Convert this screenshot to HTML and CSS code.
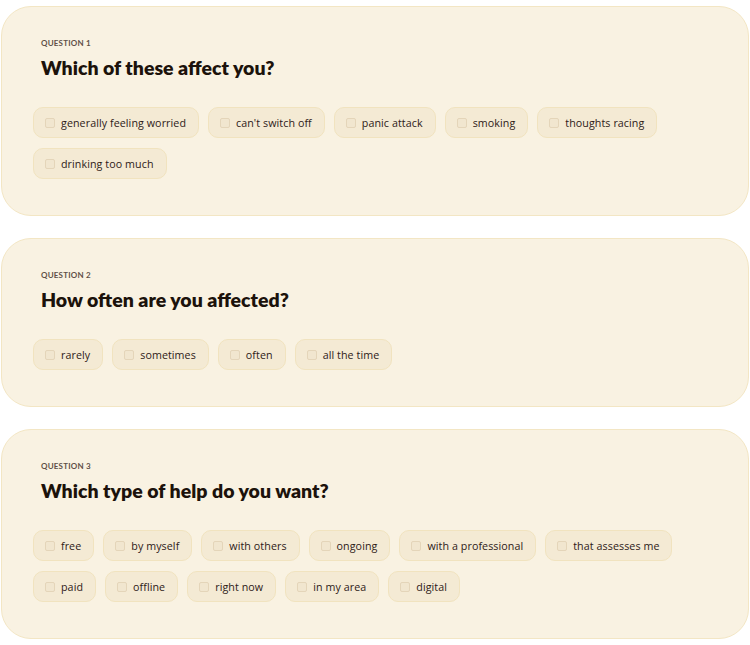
FILE: index.html
```html
<!DOCTYPE html>
<html lang="en">
<head>
<meta charset="utf-8">
<title>Questions</title>
<link rel="stylesheet" href="styles.css">
</head>
<body>
<main class="page">
  <section class="card">
    <p class="label">Question 1</p>
    <h2 class="title">Which of these affect you?</h2>
    <div class="chips">
      <label class="chip"><span class="box"></span>generally feeling worried</label>
      <label class="chip"><span class="box"></span>can't switch off</label>
      <label class="chip"><span class="box"></span>panic attack</label>
      <label class="chip"><span class="box"></span>smoking</label>
      <label class="chip"><span class="box"></span>thoughts racing</label>
      <label class="chip"><span class="box"></span>drinking too much</label>
    </div>
  </section>
  <section class="card">
    <p class="label">Question 2</p>
    <h2 class="title">How often are you affected?</h2>
    <div class="chips">
      <label class="chip"><span class="box"></span>rarely</label>
      <label class="chip"><span class="box"></span>sometimes</label>
      <label class="chip"><span class="box"></span>often</label>
      <label class="chip"><span class="box"></span>all the time</label>
    </div>
  </section>
  <section class="card">
    <p class="label">Question 3</p>
    <h2 class="title">Which type of help do you want?</h2>
    <div class="chips">
      <label class="chip"><span class="box"></span>free</label>
      <label class="chip"><span class="box"></span>by myself</label>
      <label class="chip"><span class="box"></span>with others</label>
      <label class="chip"><span class="box"></span>ongoing</label>
      <label class="chip"><span class="box"></span>with a professional</label>
      <label class="chip"><span class="box"></span>that assesses me</label>
      <label class="chip"><span class="box"></span>paid</label>
      <label class="chip"><span class="box"></span>offline</label>
      <label class="chip"><span class="box"></span>right now</label>
      <label class="chip"><span class="box"></span>in my area</label>
      <label class="chip"><span class="box"></span>digital</label>
    </div>
  </section>
</main>
</body>
</html>
```
FILE: styles.css
```css
* { box-sizing: border-box; }
html, body { margin: 0; padding: 0; background: #ffffff; }
body { font-family: "Lato", "Open Sans", sans-serif; color: #2b1d14; }
.page {
  display: flex;
  flex-direction: column;
  gap: 22px;
  padding: 6px 1px 6px 1px;
}
.card {
  background: #f9f2e2;
  border: 1px solid #f3e6c4;
  border-radius: 30px;
  padding: 31px 31px 36px 31px;
}
.label {
  margin: 0 0 0 8px;
  font-size: 8px;
  line-height: 10px;
  font-weight: 700;
  letter-spacing: 0.2px;
  text-transform: uppercase;
  color: #5f5047;
}
.title {
  margin: 8px 0 0 8px;
  font-size: 19.5px;
  line-height: 24px;
  font-weight: 800;
  color: #1c120b;
}
.chips {
  display: flex;
  flex-wrap: wrap;
  gap: 10px 9px;
  margin-top: 27px;
}
.chip {
  display: flex;
  align-items: center;
  height: 31px;
  padding: 0 12px 0 11px;
  background: #f4ead4;
  border: 1px solid #f1e3bf;
  border-radius: 10px;
  font-family: "Open Sans", "Lato", sans-serif;
  font-size: 10.7px;
  letter-spacing: 0.08px;
  color: #2e2018;
}
.box {
  width: 10px;
  height: 10px;
  margin-right: 6px;
  border: 1px solid #e4d5b9;
  background: #f1e6cf;
  border-radius: 2px;
  flex: none;
}
```
